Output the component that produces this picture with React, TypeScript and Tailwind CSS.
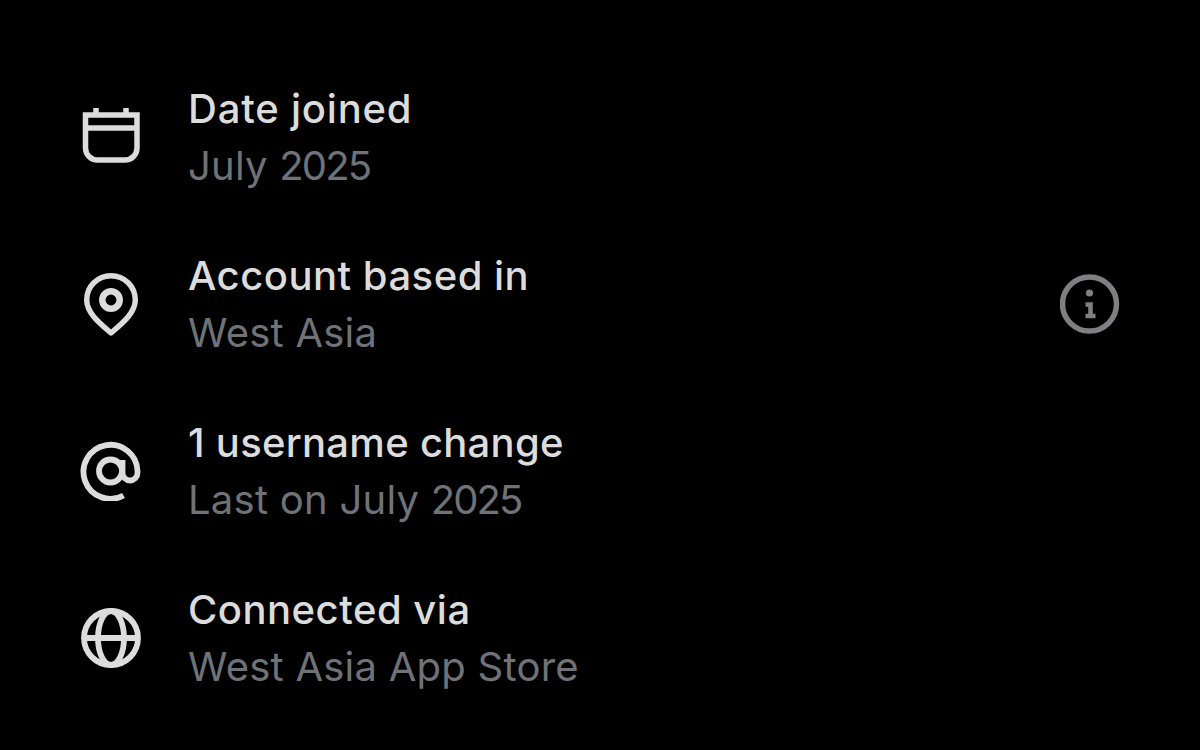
const I = "#dcdcdc";
const G = "#7f7f84";

function Calendar() {
  return (
    <svg width="60" height="60" viewBox="0 0 60 60" fill="none" stroke={I} strokeWidth="5.5">
      <path d="M4.5 8H56V41a12 12 0 0 1-12 12H16.5A12 12 0 0 1 4.5 41Z" />
      <path d="M4.5 21H56M15 1V8M45 1V8" />
    </svg>
  );
}
function Pin() {
  return (
    <svg width="60" height="70" viewBox="0 0 60 70" fill="none" stroke={I} strokeWidth="5.5" strokeLinejoin="round">
      <path d="M30 6.7a24.3 24.3 0 0 1 24.3 24.3c0 13-13.5 23.5-24.3 33C19.2 54.5 5.7 44 5.7 31A24.3 24.3 0 0 1 30 6.7Z" />
      <circle cx="30" cy="31" r="8.7" strokeWidth="6.5" />
    </svg>
  );
}
function At() {
  return (
    <svg width="61" height="60" viewBox="0 0 61 60" fill="none" stroke={I} strokeWidth="5.8">
      <path d="M43.5 54.5A27 27 0 1 1 57.5 30v2a7.5 7.5 0 0 1-15 0V19" />
      <circle cx="30.5" cy="30" r="11.5" />
    </svg>
  );
}
function Globe() {
  return (
    <svg width="60" height="60" viewBox="0 0 60 60" fill="none" stroke={I} strokeWidth="5.8">
      <circle cx="30" cy="30" r="27" />
      <ellipse cx="30" cy="30" rx="13" ry="27" />
      <path d="M3 30H57" />
    </svg>
  );
}
function Info() {
  return (
    <svg width="60" height="60" viewBox="0 0 60 60" fill="none" stroke={G} strokeWidth="5.5">
      <circle cx="29.5" cy="30" r="27" />
      <circle cx="29.5" cy="19" r="3.6" fill={G} stroke="none" />
      <path d="M25.5 30.5H30.5V42M25.5 42H35.5" strokeWidth="4.6" />
    </svg>
  );
}

function Row({ icon, title, sub, right, titleClass }: { icon: React.ReactNode; title: string; sub: React.ReactNode; right?: React.ReactNode; titleClass: string }) {
  return (
    <div className="flex h-[114px] items-center">
      <div className="flex w-[61px] shrink-0 items-center justify-center">{icon}</div>
      <div className="ml-[47px] flex flex-1 flex-col">
        <div className={`h-[57px] text-[40px] leading-[57px] font-medium text-[#dcdcdc] ${titleClass}`}>{title}</div>
        <div className="h-[57px] text-[40px] leading-[57px] font-normal tracking-[0.25px] text-[#6f7277]">{sub}</div>
      </div>
      {right}
    </div>
  );
}

function Year() {
  return <span className="tracking-[-1.9px]">2025</span>;
}

export default function App() {
  return (
    <div className="h-[750px] w-[1200px] overflow-hidden bg-black pt-[80px] pr-[80px] pl-[80px] font-['Inter',sans-serif]">
      <div className="flex flex-col gap-[53px]">
        <Row icon={<Calendar />} titleClass="tracking-[0.8px]" title="Date joined" sub={<>July <Year /></>} />
        <Row icon={<Pin />} titleClass="tracking-[0.5px]" title="Account based in" sub="West Asia" right={<Info />} />
        <Row icon={<At />} titleClass="tracking-[0.28px]" title="1 username change" sub={<>Last on July <Year /></>} />
        <Row icon={<Globe />} titleClass="tracking-[0.5px]" title="Connected via" sub="West Asia App Store" />
      </div>
    </div>
  );
}
